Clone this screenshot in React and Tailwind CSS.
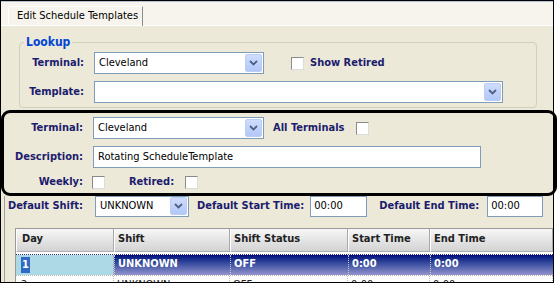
import React from "react";

// Dropdown arrow button used by the XP style combo boxes
const DropButton = () => (
  <div className="ml-auto mr-[1px] h-[18px] w-[17px] rounded-[2px] border border-[#b9cdf5] bg-gradient-to-b from-[#cfdcfc] to-[#b2c8f8] flex items-center justify-center">
    <svg width="9" height="6" viewBox="0 0 9 6">
      <path d="M1 1 L4.5 4.5 L8 1" fill="none" stroke="#4d6185" strokeWidth="1.8" />
    </svg>
  </div>
);

const Combo = ({ value, className }) => (
  <div className={`flex items-center bg-white border border-[#7f9db9] ${className}`}>
    <span className="pl-[4px] text-[11px] text-black">{value}</span>
    <DropButton />
  </div>
);

const Check = () => (
  <div className="h-[13px] w-[13px] bg-white border border-t-[#8a8a8a] border-l-[#8a8a8a] border-r-[#dcdcdc] border-b-[#dcdcdc] shrink-0" />
);

const Label = ({ children, className = "" }) => (
  <span className={`text-[11px] font-bold text-[#1c1c6e] whitespace-nowrap ${className}`}>{children}</span>
);

const columns = [
  { name: "Day", w: "w-[98px]", pad: "pl-[5px]" },
  { name: "Shift", w: "w-[116px]", pad: "pl-[3px]" },
  { name: "Shift Status", w: "w-[118px]", pad: "pl-[3px]" },
  { name: "Start Time", w: "w-[82px]", pad: "pl-[3px]" },
  { name: "End Time", w: "flex-1", pad: "pl-[3px]" },
];

const App = () => {
  return (
    <div className="w-[557px] h-[284px] bg-white overflow-hidden font-['DejaVu_Sans_Condensed','DejaVu_Sans',sans-serif]">
      <div className="w-[554px] h-[283px] border border-black bg-[#ece9d8] flex flex-col">
        {/* tab strip */}
        <div className="h-[25px] border-t border-[#b3c1d6] bg-[#f6f4ec] border-b border-b-white pl-[7px] pt-[4px] flex shrink-0">
          <div className="h-[20px] w-[135px] pl-[8px] border-l border-t border-white border-r border-r-[#8d8d8d] flex items-center text-[11px] text-black whitespace-nowrap">
            Edit Schedule Templates
          </div>
        </div>

        {/* lookup group */}
        <fieldset className="ml-[18px] mt-[9px] w-[518px] border border-[#d0d0bf] rounded-[4px] px-0 pb-[4px] pt-0 shrink-0">
          <legend className="ml-[4px] px-[2px] text-[12px] leading-[14px] font-bold text-[#0046d5]">Lookup</legend>
          <div className="flex items-center pt-[3px]">
            <Label className="w-[64px] text-right">Terminal:</Label>
            <Combo value="Cleveland" className="ml-[10px] w-[170px] h-[22px]" />
            <div className="ml-[27px]"><Check /></div>
            <Label className="ml-[6px]">Show Retired</Label>
          </div>
          <div className="flex items-center mt-[7px]">
            <Label className="w-[64px] text-right">Template:</Label>
            <Combo value="" className="ml-[10px] w-[409px] h-[22px]" />
          </div>
        </fieldset>

        {/* highlighted detail box */}
        <div className="mt-[2px] w-[556px] border-[3px] border-black rounded-[9px] pt-[4px] pb-[2px] shrink-0">
          <div className="flex items-center">
            <Label className="w-[79px] text-right">Terminal:</Label>
            <Combo value="Cleveland" className="ml-[10px] w-[171px] h-[22px]" />
            <Label className="ml-[9px]">All Terminals</Label>
            <div className="ml-[12px]"><Check /></div>
          </div>
          <div className="flex items-center mt-[7px]">
            <Label className="w-[79px] text-right">Description:</Label>
            <div className="ml-[10px] w-[388px] h-[22px] bg-white border border-[#7f9db9] flex items-center pl-[4px] text-[11px] text-black">
              Rotating ScheduleTemplate
            </div>
          </div>
          <div className="flex items-center mt-[6px]">
            <Label className="w-[79px] text-right">Weekly:</Label>
            <div className="ml-[9px]"><Check /></div>
            <Label className="ml-[24px]">Retired:</Label>
            <div className="ml-[11px]"><Check /></div>
          </div>
        </div>

        {/* lower area */}
        <div className="flex-1 min-h-0 overflow-hidden ml-[3px] border-l border-[#a0a0a0] flex flex-col">
          <div className="flex items-center shrink-0">
            <Label className="w-[78px] text-right">Default Shift:</Label>
            <Combo value="UNKNOWN" className="ml-[12px] w-[94px] h-[21px]" />
            <Label className="ml-[8px]">Default Start Time:</Label>
            <div className="ml-[6px] w-[57px] h-[21px] bg-white border border-[#7f9db9] flex items-center pl-[3px] text-[11px] text-black">00:00</div>
            <Label className="ml-[12px]">Default End Time:</Label>
            <div className="ml-[8px] w-[56px] h-[21px] bg-white border border-[#7f9db9] flex items-center pl-[3px] text-[11px] text-black">00:00</div>
          </div>

          {/* grid */}
          <div className="ml-[10px] mt-[11px] flex-1 border-l border-t border-[#9a9a9a] bg-white flex flex-col">
            <div className="flex h-[23px] shrink-0">
              {columns.map((c) => (
                <div
                  key={c.name}
                  className={`${c.w} ${c.pad} h-full flex items-center bg-gradient-to-b from-[#f7f7f7] to-[#d3d3d3] border-r border-r-[#a8a8a8] border-l border-l-white border-b border-b-[#b0b0b0] text-[11px] font-bold text-[#222]`}
                >
                  {c.name}
                </div>
              ))}
            </div>
            <div className="flex h-[21px] mt-[2px] border-t border-dotted border-[#303070] shrink-0">
              <div className="w-[98px] bg-[#add8e6] flex items-center pl-[5px] border-r border-dotted border-[#9a9a9a]">
                <span className="bg-[#316ac5] text-white text-[11px] font-bold px-[1px] leading-[16px]">1</span>
              </div>
              {["UNKNOWN", "OFF", "0:00", "0:00"].map((t, i) => (
                <div
                  key={i}
                  className={`${columns[i + 1].w} pl-[3px] flex items-center bg-gradient-to-b from-[#06067c] to-[#9494cc] text-white text-[11px] font-bold border-l border-dotted border-[#c8c8c8]`}
                >
                  {t}
                </div>
              ))}
            </div>
            <div className="flex h-[20px] border-t border-dotted border-[#b8b8b8] shrink-0">
              {["2", "UNKNOWN", "OFF", "0:00", "0:00"].map((t, i) => (
                <div
                  key={i}
                  className={`${columns[i].w} ${columns[i].pad} flex items-center text-[11px] text-[#222] border-r border-dotted border-[#b8b8b8]`}
                >
                  {t}
                </div>
              ))}
            </div>
          </div>
        </div>
      </div>
    </div>
  );
};

export default App;
